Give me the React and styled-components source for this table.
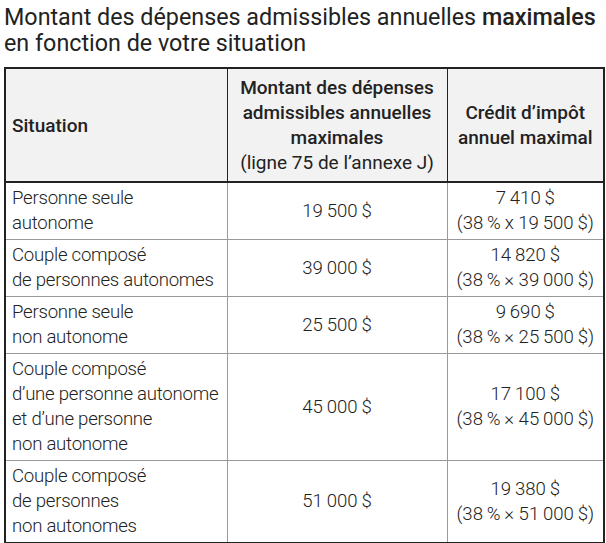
import React from "react";
import styled, { createGlobalStyle } from "styled-components";

const Global = createGlobalStyle`
  html, body { margin: 0; padding: 0; background: #ffffff; }
  body { font-family: Roboto, "Noto Sans", sans-serif; color: #262626; }
`;

const Page = styled.div`
  padding: 4px 3px 0 4px;
`;

const Title = styled.h1`
  margin: 0 0 11px 0;
  font-size: 23.3px;
  line-height: 26px;
  font-weight: 400;
  color: #222;
  white-space: nowrap;
  b { font-weight: 500; }
`;

const Table = styled.table`
  width: 599px;
  border-collapse: collapse;
  table-layout: fixed;
  border: 2px solid #222;
`;

const Th = styled.th`
  background: #f2f2f2;
  border: 1px solid #222;
  border-bottom-width: 2px;
  padding: 6px 6px;
  font-size: 19px;
  line-height: 25px;
  font-weight: 500;
  color: #222;
  white-space: nowrap;
  text-align: ${(p) => (p.$left ? "left" : "center")};
  vertical-align: middle;
  span { font-weight: 400; }
`;

const Td = styled.td`
  border: 1px solid #9a9a9a;
  padding: 3px 6px;
  font-size: 18.6px;
  line-height: 25px;
  font-weight: 300;
  letter-spacing: ${(p) => (p.$left ? "-0.25px" : "0")};
  color: #222;
  white-space: nowrap;
  text-align: ${(p) => (p.$left ? "left" : "center")};
  vertical-align: middle;
`;

const ns = "\u2009";
const rows = [
  { s: ["Personne seule", "autonome"], m: `19${ns}500${ns}$`, c: `7${ns}410${ns}$`, f: `(38${ns}%${ns}x 19${ns}500${ns}$)` },
  { s: ["Couple composé", "de personnes autonomes"], m: `39${ns}000${ns}$`, c: `14${ns}820${ns}$`, f: `(38${ns}%${ns}× 39${ns}000${ns}$)` },
  { s: ["Personne seule", "non autonome"], m: `25${ns}500${ns}$`, c: `9${ns}690${ns}$`, f: `(38${ns}%${ns}× 25${ns}500${ns}$)` },
  { s: ["Couple composé", "d’une personne autonome", "et d’une personne", "non autonome"], m: `45${ns}000${ns}$`, c: `17${ns}100${ns}$`, f: `(38${ns}%${ns}× 45${ns}000${ns}$)` },
  { s: ["Couple composé", "de personnes", "non autonomes"], m: `51${ns}000${ns}$`, c: `19${ns}380${ns}$`, f: `(38${ns}%${ns}× 51${ns}000${ns}$)` },
];

export default function App() {
  return (
    <>
      <Global />
      <Page>
        <Title>
          Montant des dépenses admissibles annuelles <b>maximales</b>
          <br />
          en fonction de votre situation
        </Title>
        <Table>
          <colgroup>
            <col style={{ width: 222 }} />
            <col style={{ width: 220 }} />
            <col style={{ width: 157 }} />
          </colgroup>
          <thead>
            <tr>
              <Th $left>Situation</Th>
              <Th>
                Montant des dépenses
                <br />
                admissibles annuelles
                <br />
                maximales
                <br />
                <span>(ligne 75 de l’annexe J)</span>
              </Th>
              <Th>
                Crédit d’impôt
                <br />
                annuel maximal
              </Th>
            </tr>
          </thead>
          <tbody>
            {rows.map((r, i) => (
              <tr key={i}>
                <Td $left>
                  {r.s.map((l, j) => (
                    <React.Fragment key={j}>
                      {j > 0 && <br />}
                      {l}
                    </React.Fragment>
                  ))}
                </Td>
                <Td>{r.m}</Td>
                <Td>
                  {r.c}
                  <br />
                  {r.f}
                </Td>
              </tr>
            ))}
          </tbody>
        </Table>
      </Page>
    </>
  );
}
